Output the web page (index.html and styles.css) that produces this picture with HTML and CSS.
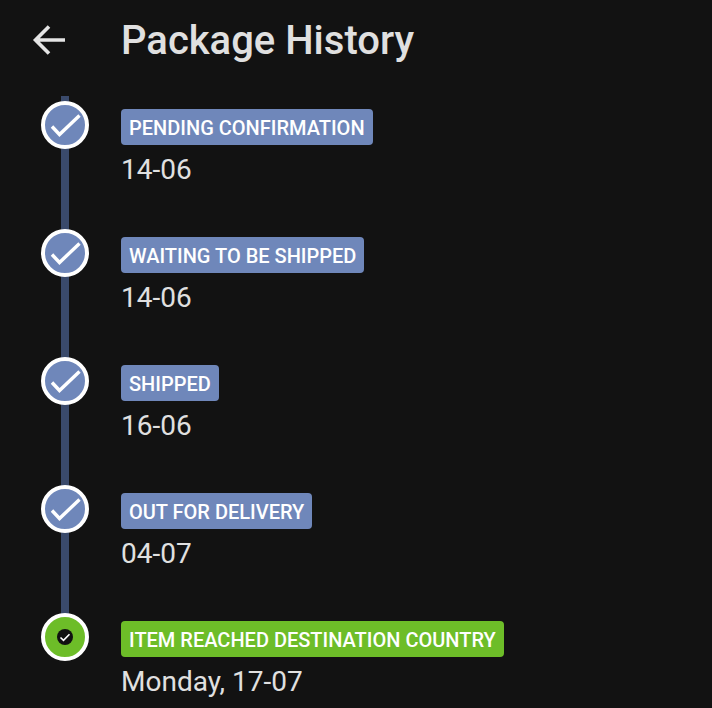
FILE: index.html
```html
<!DOCTYPE html>
<html lang="en">
<head>
<meta charset="utf-8">
<title>Package History</title>
<link rel="stylesheet" href="styles.css">
</head>
<body>
<header class="header">
  <svg class="back" viewBox="0 0 34 32" width="34" height="32" aria-hidden="true"><path d="M33 16H4M17 2.500 3.500 16 17 29.500" fill="none" stroke="#e4e4e4" stroke-width="3.600"/></svg>
  <h1 class="title">Package History</h1>
</header>
<ol class="history">
  <li class="step">
    <div class="rail"><span class="dot"><svg viewBox="0 0 40 40" width="40" height="40"><path d="M7 21.500l7.500 8L34.500 10.500" class="tick"/></svg></span></div>
    <div class="body"><span class="badge">PENDING CONFIRMATION</span><p class="date">14-06</p></div>
  </li>
  <li class="step">
    <div class="rail"><span class="dot"><svg viewBox="0 0 40 40" width="40" height="40"><path d="M7 21.500l7.500 8L34.500 10.500" class="tick"/></svg></span></div>
    <div class="body"><span class="badge">WAITING TO BE SHIPPED</span><p class="date">14-06</p></div>
  </li>
  <li class="step">
    <div class="rail"><span class="dot"><svg viewBox="0 0 40 40" width="40" height="40"><path d="M7 21.500l7.500 8L34.500 10.500" class="tick"/></svg></span></div>
    <div class="body"><span class="badge">SHIPPED</span><p class="date">16-06</p></div>
  </li>
  <li class="step">
    <div class="rail"><span class="dot"><svg viewBox="0 0 40 40" width="40" height="40"><path d="M7 21.500l7.500 8L34.500 10.500" class="tick"/></svg></span></div>
    <div class="body"><span class="badge">OUT FOR DELIVERY</span><p class="date">04-07</p></div>
  </li>
  <li class="step step-current">
    <div class="rail"><span class="dot"><svg viewBox="0 0 40 40" width="40" height="40"><circle cx="20" cy="20" r="8" fill="#111"/><path d="M15.500 20.500l3 2.800 6-6" class="tick-small"/></svg></span></div>
    <div class="body"><span class="badge">ITEM REACHED DESTINATION COUNTRY</span><p class="date">Monday, 17-07</p></div>
  </li>
</ol>
</body>
</html>
```
FILE: styles.css
```css
* { box-sizing: border-box; }
html, body { margin: 0; height: 100%; }
body {
  background: #121212;
  color: #e0e0e0;
  font-family: Roboto, "Liberation Sans", sans-serif;
  overflow: hidden;
}
.header {
  display: flex;
  align-items: center;
  height: 80px;
  margin-bottom: 16px;
  padding-left: 32px;
}
.back { flex: none; display: block; margin-right: 55px; }
.title {
  margin: 0;
  padding-top: 2px;
  font-size: 40px;
  font-weight: 500;
  line-height: 78px;
  color: #e0e0e0;
}
.history { list-style: none; margin: 0; padding: 0 0 0 41px; }
.step {
  display: flex;
  gap: 32px;
  height: 128px;
}
.rail {
  position: relative;
  flex: none;
  width: 48px;
  padding-top: 5px;
}
.rail::before {
  content: "";
  position: absolute;
  left: 20px;
  top: 0;
  bottom: 0;
  width: 8px;
  background: #3a4a6b;
}
.step-current .rail::before { bottom: auto; height: 6px; }
.dot {
  position: relative;
  display: block;
  width: 48px;
  height: 48px;
  border: 4px solid #fff;
  border-radius: 50%;
  background: #6f87ba;
}
.dot svg { display: block; }
.tick { fill: none; stroke: #fff; stroke-width: 3.400; }
.tick-small { fill: none; stroke: #fff; stroke-width: 1.600; }
.step-current .dot { background: #6dbd28; }
.body { padding-top: 13px; }
.badge {
  display: block;
  width: fit-content;
  height: 36px;
  padding: 0 8px;
  border-radius: 4px;
  background: #6f87ba;
  color: #fff;
  font-size: 20px;
  font-weight: 500;
  line-height: 38px;
  white-space: nowrap;
}
.step-current .badge { background: #6dbd28; }
.date {
  margin: 5px 0 0;
  font-size: 28px;
  line-height: 40px;
  color: #e0e0e0;
}
```
